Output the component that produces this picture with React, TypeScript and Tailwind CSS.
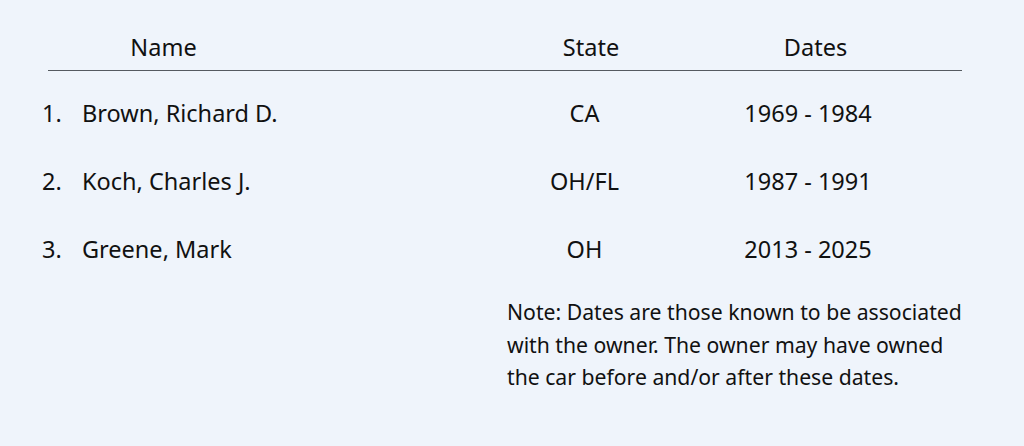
const owners = [
  { name: "Brown, Richard D.", state: "CA", dates: "1969 - 1984" },
  { name: "Koch, Charles J.", state: "OH/FL", dates: "1987 - 1991" },
  { name: "Greene, Mark", state: "OH", dates: "2013 - 2025" },
];

export default function App() {
  return (
    <div
      className="h-[446px] w-[1024px] bg-[#eff4fb] text-[#111] text-[23.5px]"
      style={{ fontFamily: '"Noto Sans", "Open Sans", sans-serif' }}
    >
      <div className="ml-[48px] w-[914px] pt-[31px]">
        <div className="flex items-center border-b border-[#555a60] pb-[7px] leading-[32px]">
          <div className="w-[231px] text-center">Name</div>
          <div className="w-[200px]" />
          <div className="w-[224px] text-center">State</div>
          <div className="w-[225px] text-center">Dates</div>
        </div>
      </div>

      <ol className="ml-[42px] mt-[8px] w-[900px]">
        {owners.map((o, i) => (
          <li key={o.name} className="flex h-[68px] items-center leading-[32px]">
            <span className="w-[40px]">{i + 1}.</span>
            <span className="w-[398px]">{o.name}</span>
            <span className="w-[209px] text-center">{o.state}</span>
            <span className="w-[238px] text-center">{o.dates}</span>
          </li>
        ))}
      </ol>

      <p className="ml-[507px] mt-[13px] w-[470px] text-[21.2px] leading-[32.5px]">
        Note: Dates are those known to be associated with the owner. The owner may have owned the car
        before and/or after these dates.
      </p>
    </div>
  );
}
